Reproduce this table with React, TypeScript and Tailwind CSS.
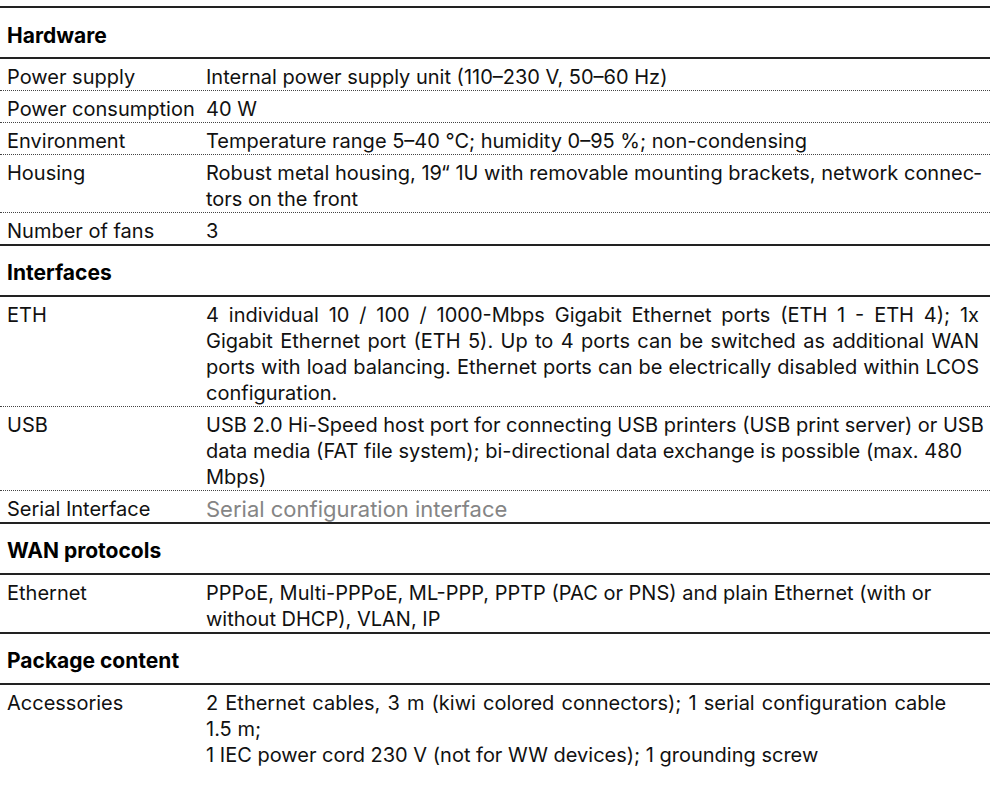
import React from 'react';

type Row = { label: string; value: React.ReactNode; muted?: boolean; justify?: boolean };
type Section = { title: string; rows: Row[] };

const sections: Section[] = [
  {
    title: 'Hardware',
    rows: [
      { label: 'Power supply', value: 'Internal power supply unit (110–230 V, 50–60 Hz)' },
      { label: 'Power consumption', value: '40 W' },
      { label: 'Environment', value: 'Temperature range 5–40 °C; humidity 0–95 %; non-condensing' },
      {
        label: 'Housing',
        value: 'Robust metal housing, 19“ 1U with removable mounting brackets, network connec\u00ADtors on the front',
      },
      { label: 'Number of fans', value: '3' },
    ],
  },
  {
    title: 'Interfaces',
    rows: [
      {
        label: 'ETH',
        justify: true,
        value:
          '4 individual 10 / 100 / 1000-Mbps Gigabit Ethernet ports (ETH 1 - ETH 4); 1x Gigabit Ethernet port (ETH 5). Up to 4 ports can be switched as additional WAN ports with load balancing. Ethernet ports can be electrically disabled within LCOS configuration.',
      },
      {
        label: 'USB',
        value:
          'USB 2.0 Hi-Speed host port for connecting USB printers (USB print server) or USB data media (FAT file system); bi-directional data exchange is possible (max. 480 Mbps)',
      },
      { label: 'Serial Interface', value: 'Serial configuration interface', muted: true },
    ],
  },
  {
    title: 'WAN protocols',
    rows: [
      {
        label: 'Ethernet',
        value: 'PPPoE, Multi-PPPoE, ML-PPP, PPTP (PAC or PNS) and plain Ethernet (with or without DHCP), VLAN, IP',
      },
    ],
  },
  {
    title: 'Package content',
    rows: [
      {
        label: 'Accessories',
        value: (
          <>
            <span className="[word-spacing:1.5px]">
              2 Ethernet cables, 3 m (kiwi colored connectors); 1 serial configuration cable
            </span>
            <br />
            1.5 m;
            <br />1 IEC power cord 230 V (not for WW devices); 1 grounding screw
          </>
        ),
      },
    ],
  },
];

export default function App() {
  return (
    <div
      lang="en"
      className="w-[990px] min-h-[793px] bg-white pt-[6px] text-[20px] leading-[26px] text-[#111]"
      style={{ fontFamily: 'Inter, "Liberation Sans", sans-serif' }}
    >
      <div className="border-t-2 border-[#222]">
        {sections.map((section, sIndex) => {
          const lastSection = sIndex === sections.length - 1;
          return (
            <div key={section.title}>
              <div
                className={`border-b-2 border-[#222] pl-[7px] text-[21px] font-bold text-black ${
                  sIndex === 0 ? 'pt-[15px] pb-[8px]' : 'pt-[14px] pb-[9px]'
                }`}
              >
                {section.title}
              </div>
              {section.rows.map((row, rIndex) => {
                const lastRow = rIndex === section.rows.length - 1;
                const border = lastRow
                  ? lastSection
                    ? ''
                    : 'border-b-2 border-solid border-[#222]'
                  : 'border-b border-dotted border-[#444]';
                return (
                  <div key={row.label} className={`grid grid-cols-[200px_1fr] pt-[5px] pb-0 ${border}`}>
                    <div className="pl-[7px]">{row.label}</div>
                    <div
                      className={`pl-[6px] ${row.justify ? 'pr-[11px] text-justify' : 'pr-[6px]'} ${
                        row.muted ? 'text-[22px] text-[#858585]' : ''
                      }`}
                    >
                      {row.value}
                    </div>
                  </div>
                );
              })}
            </div>
          );
        })}
      </div>
    </div>
  );
}
